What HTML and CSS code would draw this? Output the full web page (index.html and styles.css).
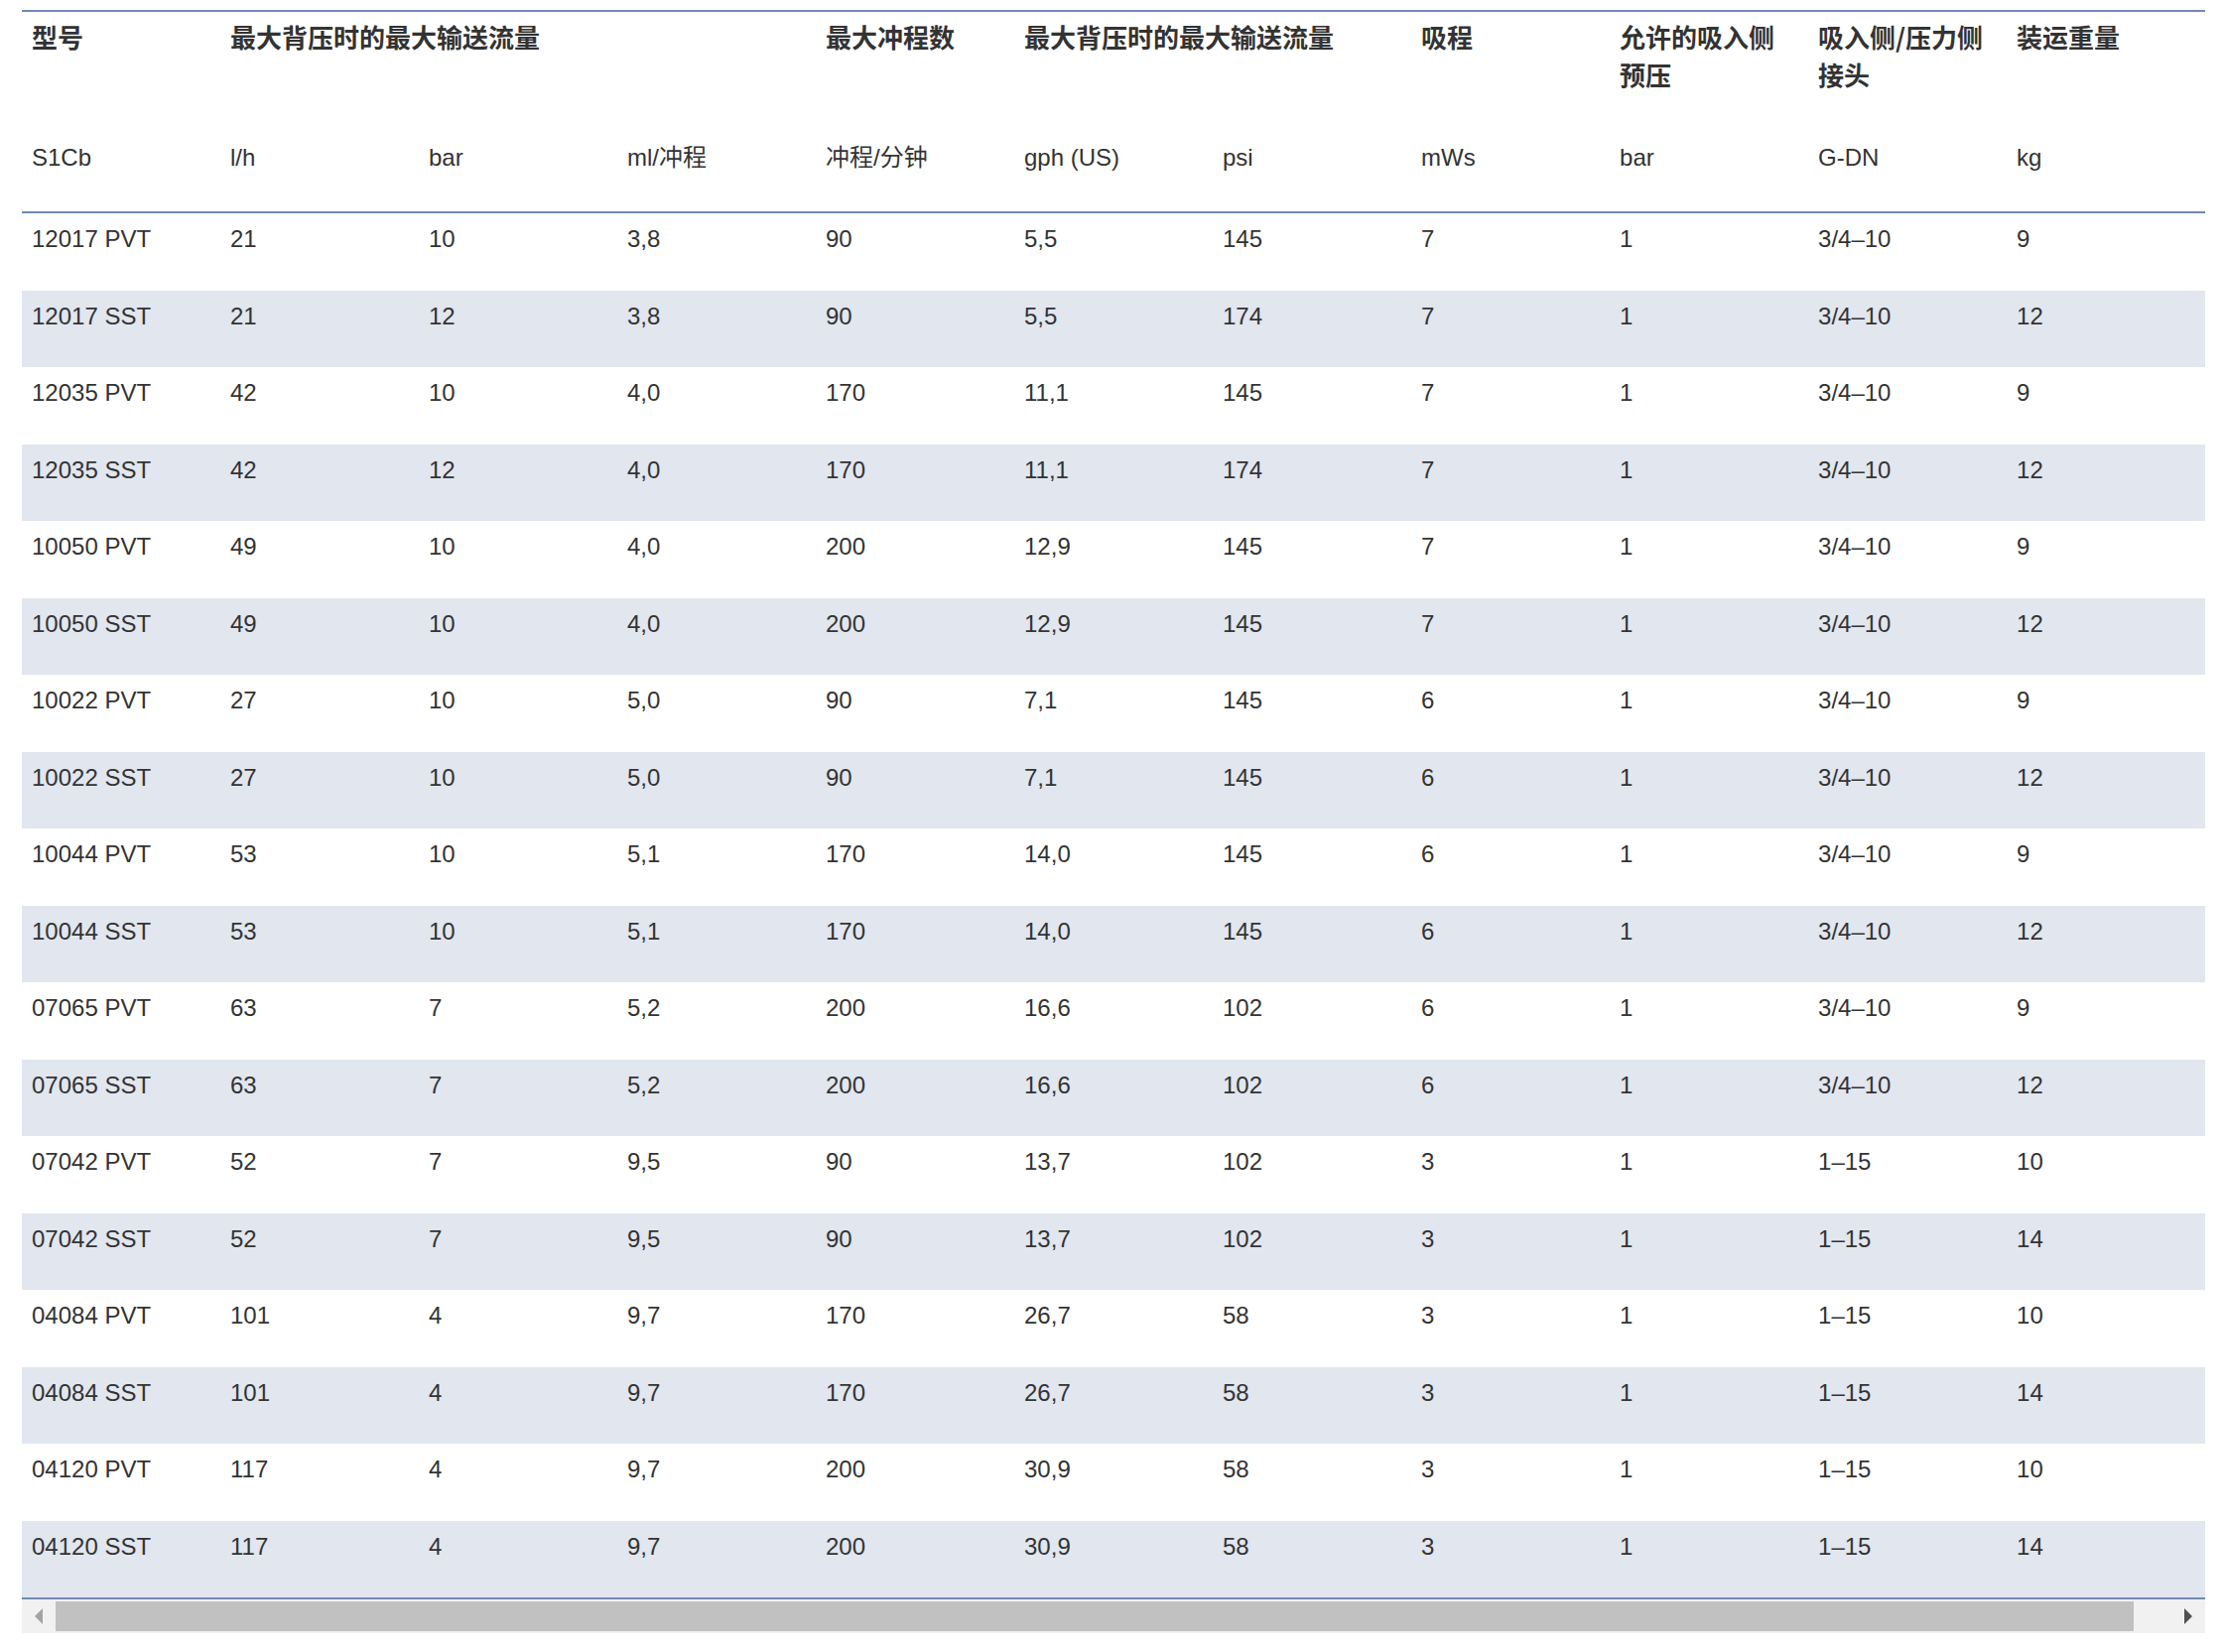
FILE: index.html
```html
<!DOCTYPE html>
<html lang="zh-CN">
<head>
<meta charset="utf-8">
<title>S1Cb 技术数据</title>
<link rel="stylesheet" href="styles.css">
</head>
<body>
<div class="wrap">
  <table class="data">
    <colgroup>
      <col class="c"><col class="c"><col class="c"><col class="c"><col class="c"><col class="c"><col class="c"><col class="c"><col class="c"><col class="c"><col class="c">
    </colgroup>
    <thead>
      <tr class="head">
        <th>型号</th>
        <th colspan="3">最大背压时的最大输送流量</th>
        <th>最大冲程数</th>
        <th colspan="2">最大背压时的最大输送流量</th>
        <th>吸程</th>
        <th>允许的吸入侧预压</th>
        <th>吸入侧/压力侧接头</th>
        <th>装运重量</th>
      </tr>
      <tr class="units">
        <td>S1Cb</td><td>l/h</td><td>bar</td><td>ml/冲程</td><td>冲程/分钟</td><td>gph (US)</td><td>psi</td><td>mWs</td><td>bar</td><td>G-DN</td><td>kg</td>
      </tr>
    </thead>
    <tbody>
      <tr><td>12017 PVT</td><td>21</td><td>10</td><td>3,8</td><td>90</td><td>5,5</td><td>145</td><td>7</td><td>1</td><td>3/4–10</td><td>9</td></tr>
      <tr><td>12017 SST</td><td>21</td><td>12</td><td>3,8</td><td>90</td><td>5,5</td><td>174</td><td>7</td><td>1</td><td>3/4–10</td><td>12</td></tr>
      <tr><td>12035 PVT</td><td>42</td><td>10</td><td>4,0</td><td>170</td><td>11,1</td><td>145</td><td>7</td><td>1</td><td>3/4–10</td><td>9</td></tr>
      <tr><td>12035 SST</td><td>42</td><td>12</td><td>4,0</td><td>170</td><td>11,1</td><td>174</td><td>7</td><td>1</td><td>3/4–10</td><td>12</td></tr>
      <tr><td>10050 PVT</td><td>49</td><td>10</td><td>4,0</td><td>200</td><td>12,9</td><td>145</td><td>7</td><td>1</td><td>3/4–10</td><td>9</td></tr>
      <tr><td>10050 SST</td><td>49</td><td>10</td><td>4,0</td><td>200</td><td>12,9</td><td>145</td><td>7</td><td>1</td><td>3/4–10</td><td>12</td></tr>
      <tr><td>10022 PVT</td><td>27</td><td>10</td><td>5,0</td><td>90</td><td>7,1</td><td>145</td><td>6</td><td>1</td><td>3/4–10</td><td>9</td></tr>
      <tr><td>10022 SST</td><td>27</td><td>10</td><td>5,0</td><td>90</td><td>7,1</td><td>145</td><td>6</td><td>1</td><td>3/4–10</td><td>12</td></tr>
      <tr><td>10044 PVT</td><td>53</td><td>10</td><td>5,1</td><td>170</td><td>14,0</td><td>145</td><td>6</td><td>1</td><td>3/4–10</td><td>9</td></tr>
      <tr><td>10044 SST</td><td>53</td><td>10</td><td>5,1</td><td>170</td><td>14,0</td><td>145</td><td>6</td><td>1</td><td>3/4–10</td><td>12</td></tr>
      <tr><td>07065 PVT</td><td>63</td><td>7</td><td>5,2</td><td>200</td><td>16,6</td><td>102</td><td>6</td><td>1</td><td>3/4–10</td><td>9</td></tr>
      <tr><td>07065 SST</td><td>63</td><td>7</td><td>5,2</td><td>200</td><td>16,6</td><td>102</td><td>6</td><td>1</td><td>3/4–10</td><td>12</td></tr>
      <tr><td>07042 PVT</td><td>52</td><td>7</td><td>9,5</td><td>90</td><td>13,7</td><td>102</td><td>3</td><td>1</td><td>1–15</td><td>10</td></tr>
      <tr><td>07042 SST</td><td>52</td><td>7</td><td>9,5</td><td>90</td><td>13,7</td><td>102</td><td>3</td><td>1</td><td>1–15</td><td>14</td></tr>
      <tr><td>04084 PVT</td><td>101</td><td>4</td><td>9,7</td><td>170</td><td>26,7</td><td>58</td><td>3</td><td>1</td><td>1–15</td><td>10</td></tr>
      <tr><td>04084 SST</td><td>101</td><td>4</td><td>9,7</td><td>170</td><td>26,7</td><td>58</td><td>3</td><td>1</td><td>1–15</td><td>14</td></tr>
      <tr><td>04120 PVT</td><td>117</td><td>4</td><td>9,7</td><td>200</td><td>30,9</td><td>58</td><td>3</td><td>1</td><td>1–15</td><td>10</td></tr>
      <tr><td>04120 SST</td><td>117</td><td>4</td><td>9,7</td><td>200</td><td>30,9</td><td>58</td><td>3</td><td>1</td><td>1–15</td><td>14</td></tr>
    </tbody>
  </table>
  <div class="scrollbar">
    <div class="sb-btn"><span class="arrow-left"></span></div>
    <div class="sb-track"><div class="sb-thumb"></div></div>
    <div class="sb-btn"><span class="arrow-right"></span></div>
  </div>
</div>
</body>
</html>
```

FILE: styles.css
```css
html, body {
  margin: 0;
  padding: 0;
  background: #ffffff;
}

body {
  font-family: "Liberation Sans", Arial, "Noto Sans CJK SC", sans-serif;
  color: #333333;
}

.wrap {
  padding: 10px 19px 0 22px;
  width: 2200px;
}

.data {
  width: 2200px;
  table-layout: fixed;
  border-collapse: separate;
  border-spacing: 0;
}

.data col.c {
  width: 200px;
}

.data th,
.data td {
  text-align: left;
  vertical-align: top;
  padding: 8px 20px 0 10px;
  white-space: normal;
}

.data .head th {
  font-family: "Noto Sans CJK SC", "Liberation Sans", sans-serif;
  font-weight: 700;
  font-size: 26px;
  line-height: 37.5px;
  color: #333333;
  border-top: 2px solid #7089b3;
  padding-top: 6px;
  padding-bottom: 39.7px;
}

.data .units td {
  font-size: 24px;
  line-height: 36px;
  padding-bottom: 36.8px;
  border-bottom: 2px solid #7089b3;
}

.data tbody td {
  font-size: 24px;
  line-height: 36px;
  padding-bottom: 33.5px;
}

.data tbody tr:nth-child(even) td {
  background: #e1e6ef;
}

.data tbody tr:last-child td {
  border-bottom: 2px solid #7089b3;
}

.scrollbar {
  display: flex;
  height: 34px;
  width: 2200px;
  background: #f1f1f1;
}

.sb-btn {
  width: 34px;
  flex: none;
  display: flex;
  align-items: center;
  justify-content: center;
}

.sb-track {
  flex: 1;
  display: flex;
  align-items: center;
}

.sb-thumb {
  width: 2094px;
  height: 30px;
  background: #c1c1c1;
}

.arrow-left {
  width: 0;
  height: 0;
  border-top: 8px solid transparent;
  border-bottom: 8px solid transparent;
  border-right: 8px solid #a3a3a3;
}

.arrow-right {
  width: 0;
  height: 0;
  border-top: 8px solid transparent;
  border-bottom: 8px solid transparent;
  border-left: 8px solid #505050;
}
```
